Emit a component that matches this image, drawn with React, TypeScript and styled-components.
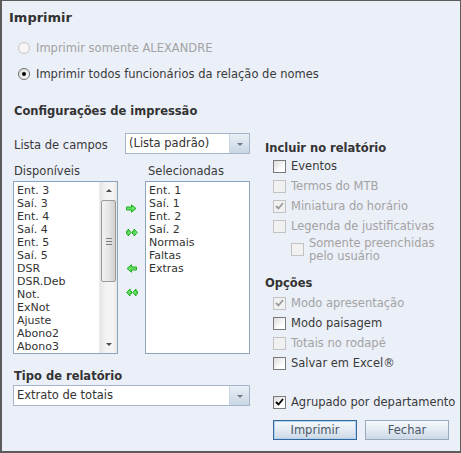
import React from 'react';
import styled, { createGlobalStyle, css } from 'styled-components';

const GlobalStyle = createGlobalStyle`
  html, body {
    margin: 0;
    padding: 0;
    background: #ffffff;
  }
  body {
    font-family: "DejaVu Sans", Verdana, sans-serif;
    font-size: 11.5px;
    color: #3a3a3a;
  }
`;

const Window = styled.div`
  width: 461px;
  height: 453px;
  box-sizing: border-box;
  border: 1px solid #5b5b5b;
  border-left-width: 2px;
  border-bottom-width: 2px;
  background: #ebeff8;
  display: flex;
  flex-direction: column;
`;

const Title = styled.div`
  height: 34px;
  box-sizing: border-box;
  padding: 9px 0 0 7px;
  font-size: 13px;
  line-height: 16px;
  font-weight: bold;
  color: #333;
`;

const RadioRow = styled.label<{ disabled?: boolean }>`
  height: 26px;
  display: flex;
  align-items: center;
  padding-left: 16px;
  line-height: 13px;
  color: ${(p) => (p.disabled ? '#a3a3a3' : '#3a3a3a')};
`;

const Radio = styled.span<{ checked?: boolean; disabled?: boolean }>`
  width: 12px;
  height: 12px;
  box-sizing: border-box;
  border-radius: 50%;
  margin-right: 6px;
  display: flex;
  align-items: center;
  justify-content: center;
  border: 1px solid ${(p) => (p.disabled ? '#c4c4c4' : '#6f6f6f')};
  background: ${(p) => (p.disabled ? '#f6f6f6' : 'linear-gradient(135deg, #d9d9d9, #ffffff)')};
  ${(p) =>
    p.checked &&
    css`
      &::after {
        content: '';
        width: 4px;
        height: 4px;
        border-radius: 50%;
        background: #000;
      }
    `}
`;

const SectionTitle = styled.div`
  font-size: 11.5px;
  line-height: 16px;
  font-weight: bold;
  color: #333;
`;

const ConfigTitle = styled(SectionTitle)`
  margin: 16px 0 0 12px;
`;

const Columns = styled.div`
  display: flex;
  padding-left: 11px;
  gap: 15px;
`;

const LeftCol = styled.div`
  width: 237px;
  display: flex;
  flex-direction: column;
`;

const FieldRow = styled.div`
  display: flex;
  align-items: flex-end;
  justify-content: space-between;
  margin-top: 14px;
`;

const FieldLabel = styled.span`
  line-height: 13px;
  padding-left: 1px;
  margin-bottom: 2px;
`;

const Select = styled.div<{ width?: number }>`
  width: ${(p) => (p.width ? `${p.width}px` : '100%')};
  height: 21px;
  box-sizing: border-box;
  border: 1px solid #a6b6ca;
  background: #fff;
  display: flex;
  align-items: stretch;
`;

const SelectValue = styled.span`
  flex: 1;
  padding-left: 3px;
  line-height: 19px;
  font-size: 11.5px;
  color: #333;
`;

const SelectArrow = styled.span`
  width: 19px;
  border-left: 1px solid #c9d5e2;
  background: linear-gradient(to bottom, #e9eff6, #c9d6e4);
  display: flex;
  align-items: center;
  justify-content: center;
  &::after {
    content: '';
    border-left: 3px solid transparent;
    border-right: 3px solid transparent;
    border-top: 3px solid #6c7a88;
    margin-top: 1px;
  }
`;

const ListLabels = styled.div`
  display: flex;
  margin-top: 11px;
  line-height: 13px;
  span:first-child {
    width: 132px;
    padding-left: 1px;
  }
  span:last-child {
    padding-left: 2px;
  }
`;

const Lists = styled.div`
  display: flex;
  height: 173px;
  margin-top: 3px;
`;

const ListBox = styled.div`
  width: 105px;
  box-sizing: border-box;
  border: 1px solid #8ea4bd;
  background: #fff;
  display: flex;
`;

const Items = styled.ul`
  flex: 1;
  list-style: none;
  margin: 0;
  padding: 2px 0 0 3px;
  overflow: hidden;
  li {
    font-size: 11px;
    line-height: 13px;
    color: #333;
    white-space: nowrap;
  }
`;

const Scrollbar = styled.div`
  width: 17px;
  display: flex;
  flex-direction: column;
  background: linear-gradient(to right, #e6e6e6, #f4f4f4 40%, #f4f4f4 80%, #e6e6e6);
  border-left: 1px solid #ececec;
`;

const ScrollBtn = styled.div<{ down?: boolean }>`
  height: 17px;
  display: flex;
  align-items: center;
  justify-content: center;
  &::after {
    content: '';
    border-left: 3px solid transparent;
    border-right: 3px solid transparent;
    ${(p) => (p.down ? 'border-top: 3px solid #4d4d4d;' : 'border-bottom: 3px solid #4d4d4d;')}
  }
`;

const Track = styled.div`
  flex: 1;
  padding: 1px 1px 0 1px;
`;

const Thumb = styled.div`
  height: 82px;
  box-sizing: border-box;
  border: 1px solid #9a9a9a;
  border-radius: 2px;
  background: linear-gradient(to right, #f2f2f2, #e6e6e6 50%, #d0d0d0);
  display: flex;
  align-items: center;
  justify-content: center;
  &::after {
    content: '';
    width: 6px;
    height: 5px;
    border-top: 1px solid #7d7d7d;
    border-bottom: 1px solid #7d7d7d;
    background: linear-gradient(#7d7d7d, #7d7d7d) center / 6px 1px no-repeat;
  }
`;

const ArrowCol = styled.div`
  width: 27px;
  display: flex;
  flex-direction: column;
  align-items: center;
  padding-top: 15px;
`;

const ArrowBtn = styled.span<{ gapTop?: boolean }>`
  height: 24px;
  display: flex;
  align-items: center;
  justify-content: center;
  margin-top: ${(p) => (p.gapTop ? '12px' : '0')};
`;

const TipoTitle = styled(SectionTitle)`
  margin-top: 14px;
  padding-left: 1px;
`;

const TipoSelect = styled(Select)`
  margin-top: 1px;
`;

const RightCol = styled.div`
  flex: 1;
  display: flex;
  flex-direction: column;
  padding-top: 21px;
`;

const CheckRow = styled.label<{ disabled?: boolean; indent?: boolean; tall?: boolean }>`
  height: ${(p) => (p.tall ? '27px' : '20px')};
  display: flex;
  align-items: center;
  padding-left: ${(p) => (p.indent ? '26px' : '8px')};
  line-height: 13px;
  white-space: nowrap;
  color: ${(p) => (p.disabled ? '#a3a3a3' : '#3a3a3a')};
`;

const Box = styled.span<{ disabled?: boolean }>`
  width: 13px;
  height: 13px;
  flex: none;
  box-sizing: border-box;
  margin-right: 5px;
  border: 1px solid ${(p) => (p.disabled ? '#c2c2c2' : '#7a7a7a')};
  background: ${(p) =>
    p.disabled ? '#f1f1f1' : 'linear-gradient(135deg, #dcdcdc, #ffffff 70%)'};
  display: flex;
  align-items: center;
  justify-content: center;
`;

const OpcoesTitle = styled(SectionTitle)`
  margin-top: 12px;
  margin-bottom: 2px;
`;

const Spacer = styled.div`
  height: 19px;
`;

const ButtonRow = styled.div`
  display: flex;
  gap: 8px;
  padding-left: 8px;
  margin-top: 8px;
`;

const Button = styled.button<{ primary?: boolean }>`
  width: 84px;
  height: 20px;
  box-sizing: border-box;
  padding: 0;
  font-family: "DejaVu Sans", Verdana, sans-serif;
  font-size: 11.5px;
  color: #4a5868;
  border: 1px solid ${(p) => (p.primary ? '#3c6798' : '#9aaabd')};
  ${(p) => p.primary && 'box-shadow: inset 0 0 0 1px #a9d4f2;'}
  background: linear-gradient(to bottom, #f6f9fc, #e3eaf2 50%, #ccd8e5);
`;

const CheckMark = ({ color }: { color: string }) => (
  <svg width="9" height="8" viewBox="0 0 9 8">
    <path d="M1 4 L3.5 6.5 L8 1" fill="none" stroke={color} strokeWidth="1.8" />
  </svg>
);

const RightArrow = ({ flip }: { flip?: boolean }) => (
  <svg width="11" height="9" viewBox="0 0 11 9" style={flip ? { transform: 'scaleX(-1)' } : undefined}>
    <path
      d="M0.5 3 H5.5 V0.8 L10 4.5 L5.5 8.2 V6 H0.5 Z"
      fill="#66e066"
      stroke="#1fae1f"
      strokeWidth="1"
    />
  </svg>
);

const DoubleArrow = ({ flip }: { flip?: boolean }) => (
  <svg width="12" height="9" viewBox="0 0 12 9" style={flip ? { transform: 'scaleX(-1)' } : undefined}>
    <path d="M0.5 3.2 H2 V1 L5.3 4.5 L2 8 V5.8 H0.5 Z" fill="#66e066" stroke="#1fae1f" strokeWidth="1" />
    <path d="M6.5 3.2 H8 V1 L11.3 4.5 L8 8 V5.8 H6.5 Z" fill="#66e066" stroke="#1fae1f" strokeWidth="1" />
  </svg>
);

type CheckProps = {
  label: React.ReactNode;
  checked?: boolean;
  disabled?: boolean;
  indent?: boolean;
  tall?: boolean;
};

const Check = ({ label, checked, disabled, indent, tall }: CheckProps) => (
  <CheckRow disabled={disabled} indent={indent} tall={tall}>
    <Box disabled={disabled}>{checked && <CheckMark color={disabled ? '#9a9a9a' : '#000'} />}</Box>
    <span>{label}</span>
  </CheckRow>
);

const available = [
  'Ent. 3', 'Saí. 3', 'Ent. 4', 'Saí. 4', 'Ent. 5', 'Saí. 5', 'DSR',
  'DSR.Deb', 'Not.', 'ExNot', 'Ajuste', 'Abono2', 'Abono3',
];
const selected = ['Ent. 1', 'Saí. 1', 'Ent. 2', 'Saí. 2', 'Normais', 'Faltas', 'Extras'];

export default function App() {
  return (
    <>
      <GlobalStyle />
      <Window>
        <Title>Imprimir</Title>
        <RadioRow disabled>
          <Radio disabled />
          Imprimir somente ALEXANDRE
        </RadioRow>
        <RadioRow>
          <Radio checked />
          Imprimir todos funcionários da relação de nomes
        </RadioRow>
        <ConfigTitle>Configurações de impressão</ConfigTitle>
        <Columns>
          <LeftCol>
            <FieldRow>
              <FieldLabel>Lista de campos</FieldLabel>
              <Select width={125}>
                <SelectValue>(Lista padrão)</SelectValue>
                <SelectArrow />
              </Select>
            </FieldRow>
            <ListLabels>
              <span>Disponíveis</span>
              <span>Selecionadas</span>
            </ListLabels>
            <Lists>
              <ListBox>
                <Items>
                  {available.map((s) => (
                    <li key={s}>{s}</li>
                  ))}
                </Items>
                <Scrollbar>
                  <ScrollBtn />
                  <Track>
                    <Thumb />
                  </Track>
                  <ScrollBtn down />
                </Scrollbar>
              </ListBox>
              <ArrowCol>
                <ArrowBtn>
                  <RightArrow />
                </ArrowBtn>
                <ArrowBtn>
                  <DoubleArrow />
                </ArrowBtn>
                <ArrowBtn gapTop>
                  <RightArrow flip />
                </ArrowBtn>
                <ArrowBtn>
                  <DoubleArrow flip />
                </ArrowBtn>
              </ArrowCol>
              <ListBox>
                <Items>
                  {selected.map((s) => (
                    <li key={s}>{s}</li>
                  ))}
                </Items>
              </ListBox>
            </Lists>
            <TipoTitle>Tipo de relatório</TipoTitle>
            <TipoSelect>
              <SelectValue>Extrato de totais</SelectValue>
              <SelectArrow />
            </TipoSelect>
          </LeftCol>
          <RightCol>
            <SectionTitle>Incluir no relatório</SectionTitle>
            <Check label="Eventos" />
            <Check label="Termos do  MTB" disabled />
            <Check label="Miniatura do horário" disabled checked />
            <Check label="Legenda de justificativas" disabled />
            <Check
              indent
              tall
              disabled
              label={
                <>
                  Somente preenchidas
                  <br />
                  pelo usuário
                </>
              }
            />
            <OpcoesTitle>Opções</OpcoesTitle>
            <Check label="Modo apresentação" disabled checked />
            <Check label="Modo paisagem" />
            <Check label="Totais no rodapé" disabled />
            <Check label="Salvar em Excel®" />
            <Spacer />
            <Check label="Agrupado por departamento" checked />
            <ButtonRow>
              <Button primary>Imprimir</Button>
              <Button>Fechar</Button>
            </ButtonRow>
          </RightCol>
        </Columns>
      </Window>
    </>
  );
}
